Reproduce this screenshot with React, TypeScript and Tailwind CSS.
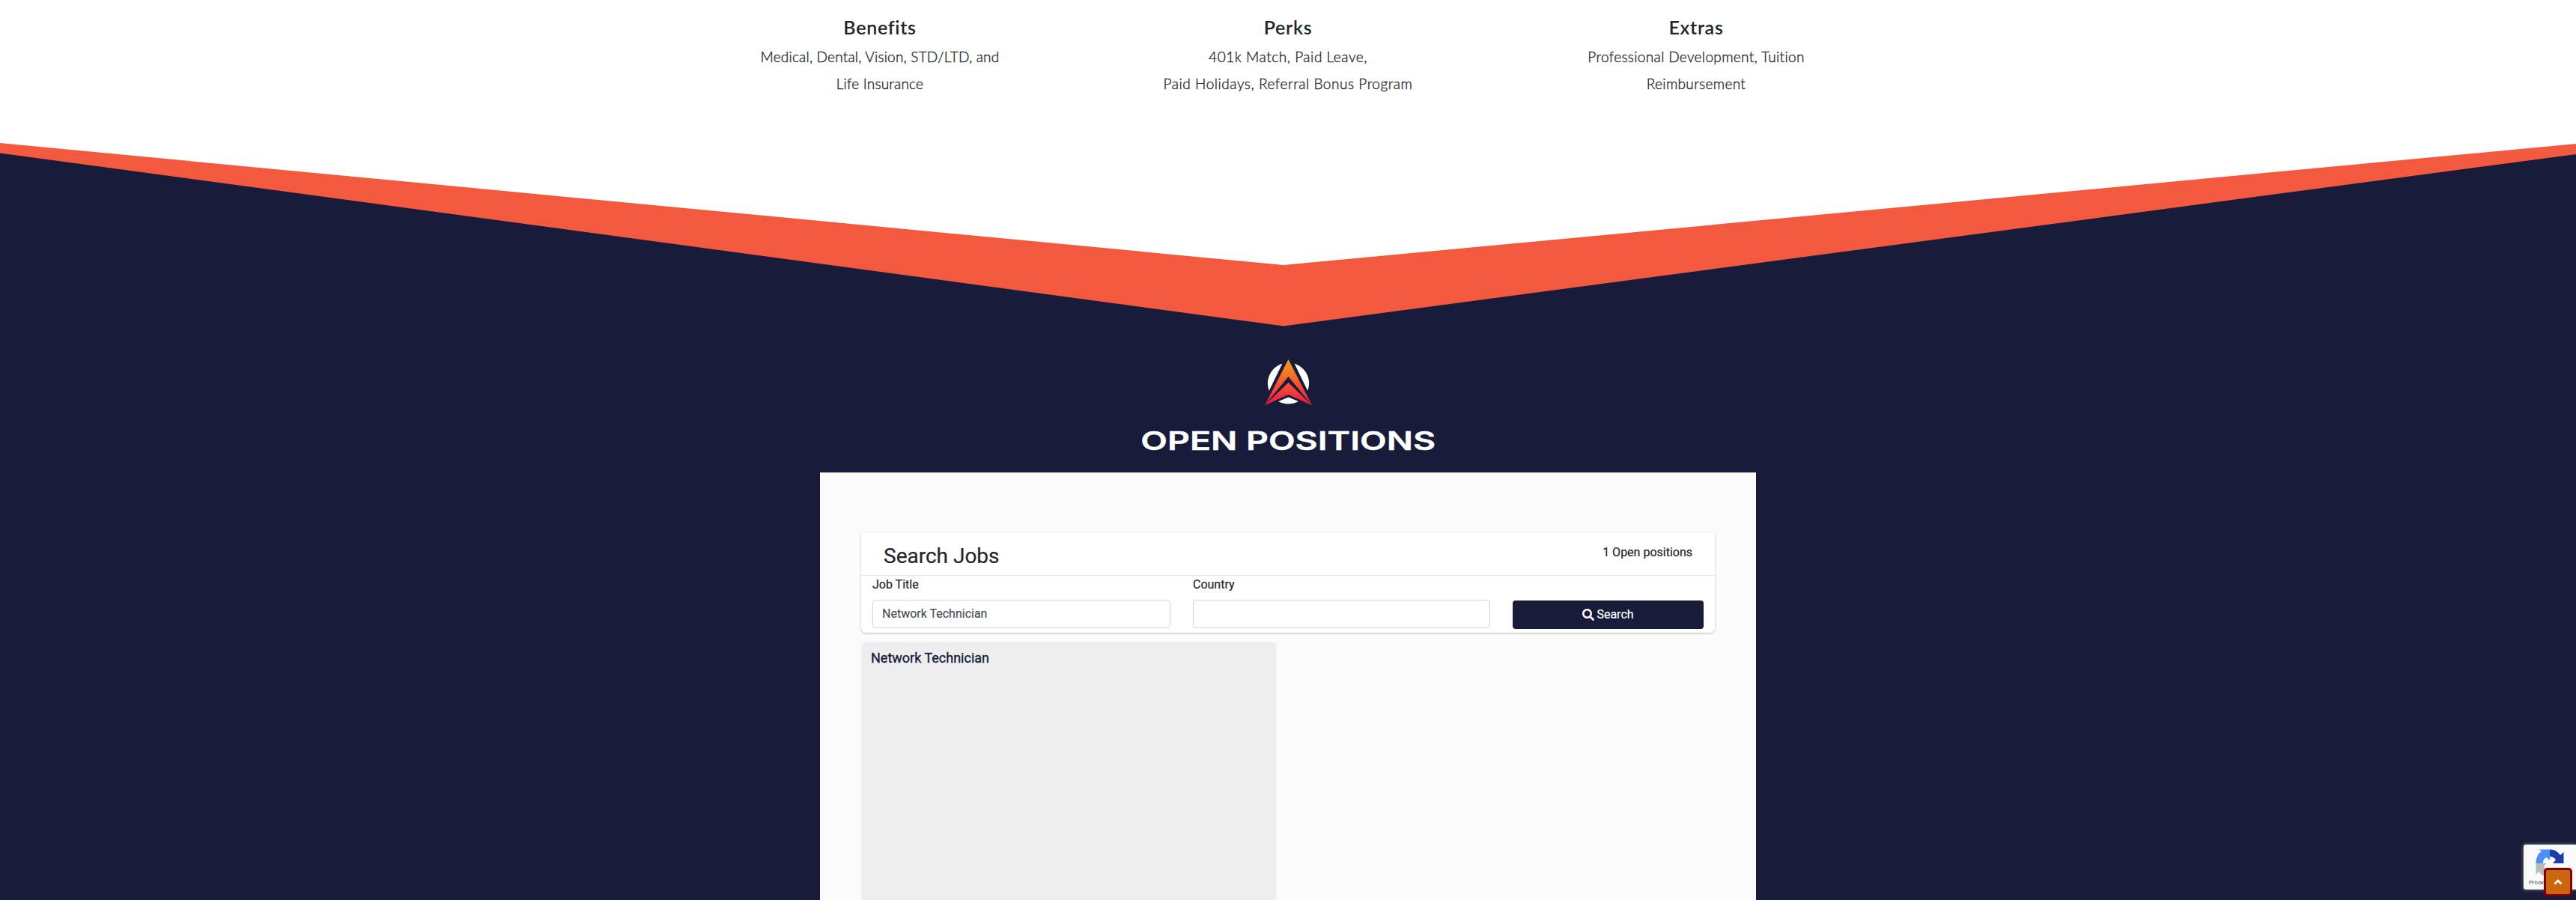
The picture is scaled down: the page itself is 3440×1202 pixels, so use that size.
import { FaSearch } from "react-icons/fa";

const columns = [
  {
    title: "Benefits",
    tracking: "tracking-[0.2px]",
    lines: ["Medical, Dental, Vision, STD/LTD, and", "Life Insurance"],
  },
  {
    title: "Perks",
    tracking: "tracking-[0.55px]",
    lines: ["401k Match, Paid Leave,", "Paid Holidays, Referral Bonus Program"],
  },
  {
    title: "Extras",
    tracking: "tracking-[0.35px]",
    lines: ["Professional Development, Tuition", "Reimbursement"],
  },
];

function Divider() {
  return (
    <svg className="block w-full h-[260px]" viewBox="0 0 3440 260" preserveAspectRatio="none">
      <path d="M0 11 L1714 174 L3440 12 V260 H0 Z" fill="#f3593e" />
      <path d="M0 24.5 L1714 255.5 L3440 26 V260 H0 Z" fill="#181c3a" />
    </svg>
  );
}

function Logo() {
  return (
    <svg className="block w-16 h-16" viewBox="0 0 64 64">
      <defs>
        <linearGradient id="flame" gradientUnits="userSpaceOnUse" x1="0" y1="0" x2="0" y2="62">
          <stop offset="0.08" stopColor="#f7941e" />
          <stop offset="0.88" stopColor="#ee2440" />
        </linearGradient>
      </defs>
      <circle cx="32.5" cy="32" r="27.6" fill="#fff" />
      <path d="M32.5 -11 L-5 66 L32.5 50.5 L70 66 Z" fill="#181c3a" />
      <path d="M32.5 0 L64 61.2 L32.5 23 L1 61.2 Z" fill="url(#flame)" />
      <path d="M32.5 31 L64 61.2 L32.5 47 L1 61.2 Z" fill="url(#flame)" />
    </svg>
  );
}

function Recaptcha() {
  return (
    <div className="fixed right-0 bottom-[14px] w-[70px] h-[60px] rounded-l-[3px] bg-[#f9f9f9] shadow-[0_0_5px_gray]">
      <svg className="absolute left-4 top-1.5 w-[38px] h-[38px]" viewBox="0 0 38 38">
        <path d="M0.5 19 C0.5 11 4 5 8 3 L4.500 0.5 H19 V15 L14.500 11 C11 13 10 15 10 19 Z" fill="#4a90f5" />
        <path d="M19 0.500 C26 0.500 30 4 33 8 L37.500 4 V19 H23 L27 14.500 C25 11 22 10 19 10 Z" fill="#1c3aa9" />
        <path d="M0.500 19 H14.500 L11 23 C13 27 16 28 19 28 C23 28 26 26 27.500 24 L34 30 C30 35 25 37.500 19 37.500 C12 37.500 7 34 4 30 L0.500 34 Z" fill="#bababa" />
      </svg>
      <span className="absolute left-[7px] top-[46px] whitespace-nowrap text-[8px] leading-[10px] text-[#555] font-[Roboto,sans-serif]">
        Privacy - Terms
      </span>
    </div>
  );
}

export default function App() {
  return (
    <div className="h-[1202px] overflow-hidden bg-white text-[#212529] font-[Roboto,sans-serif]">
      <div className="h-[180px] flex justify-center">
        {columns.map((c) => (
          <div key={c.title} className="w-[545px] pt-[18px] text-center font-[Lato,sans-serif]">
            <h3 className="text-[25px] leading-[36px] font-semibold tracking-[0.7px]">{c.title}</h3>
            <div className={"pt-1 text-[19px] leading-[36px] font-light [-webkit-text-stroke:0.35px] " + c.tracking}>
              {c.lines.map((l) => (
                <p key={l}>{l}</p>
              ))}
            </div>
          </div>
        ))}
      </div>
      <Divider />
      <div className="h-[762px] bg-[#181c3a] flex flex-col items-center pt-10">
        <Logo />
        <h2 className="mt-6 h-[42px] mb-[21px] text-[34px] leading-[42px] font-semibold text-white whitespace-nowrap font-[Inter,sans-serif] [-webkit-text-stroke:0.4px] scale-x-[1.365]">
          OPEN POSITIONS
        </h2>
        <div className="w-[1250px] h-[571px] bg-[#fbfbfb] px-[55px] pt-20 [-webkit-text-stroke:0.2px]">
          <div className="h-[134px] rounded-md bg-white shadow-[0_1px_3px_rgba(0,0,0,0.25)]">
            <div className="h-[58px] flex justify-between items-start px-[30px] border-b border-[#e4e5e7]">
              <h4 className="pt-[15px] text-[28px] leading-[34px]">Search Jobs</h4>
              <span className="pt-[15px] text-[16px] leading-6">1 Open positions</span>
            </div>
            <div className="flex gap-[30px] px-[15px] text-[16px]">
              <label className="w-[398px] leading-6">
                Job Title
                <input
                  className="mt-2 block h-[38px] w-full rounded border border-[#ced4da] bg-white px-3 pb-px text-[#495057]"
                  defaultValue="Network Technician"
                />
              </label>
              <label className="w-[397px] leading-6">
                Country
                <input className="mt-2 block h-[38px] w-full rounded border border-[#ced4da] bg-white px-3" />
              </label>
              <button className="mt-[33px] h-[38px] w-[255px] rounded bg-[#181c3a] text-white flex items-center justify-center gap-[3px]">
                <FaSearch className="w-4 h-4" />
                Search
              </button>
            </div>
          </div>
          <div className="mt-[13px] ml-0.5 w-[551px] h-[360px] rounded bg-[#eeeeee] shadow-[0_1px_3px_rgba(0,0,0,0.16)] pl-[11px] pt-[7px]">
            <a className="text-[18px] leading-[27px] text-[#181c3a] [-webkit-text-stroke:0.35px]">Network Technician</a>
          </div>
        </div>
      </div>
      <Recaptcha />
      <button className="fixed right-[5px] bottom-[5px] w-[38px] h-[38px] rounded-[5px] border-[3px] border-[#800000] bg-[#cc660e] flex items-center justify-center">
        <svg className="w-3 h-3" viewBox="0 0 12 12">
          <path d="M1.500 8.500 L6 4 L10.500 8.500" fill="none" stroke="#fff" strokeWidth="2.600" />
        </svg>
      </button>
    </div>
  );
}
